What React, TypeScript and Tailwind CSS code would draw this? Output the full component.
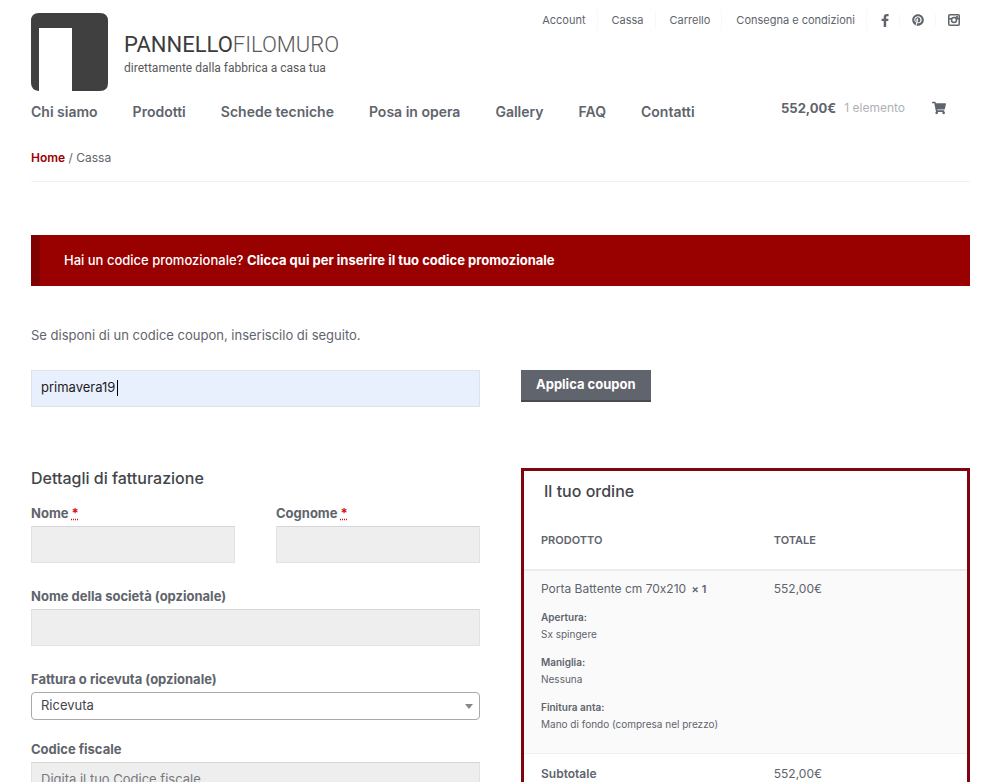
import type { ReactNode } from 'react';
import { FaPinterest, FaShoppingCart } from 'react-icons/fa';

const topLinks = ['Account', 'Cassa', 'Carrello', 'Consegna e condizioni'];

const mainLinks = ['Chi siamo', 'Prodotti', 'Schede tecniche', 'Posa in opera', 'Gallery', 'FAQ', 'Contatti'];

const variations = [
  { name: 'Apertura:', value: 'Sx spingere' },
  { name: 'Maniglia:', value: 'Nessuna' },
  { name: 'Finitura anta:', value: 'Mano di fondo (compresa nel prezzo)' },
];

const inputClass =
  'block w-full h-[37px] px-[9px] pb-1 bg-[#eeeeee] border border-[#e2e2e2] border-t-[#d6d6d6] text-[13px] text-[#43454b] placeholder:text-[#76787d] outline-none';

function FacebookIcon() {
  return (
    <svg viewBox="0 0 8 13" className="w-2 h-[13px]" fill="currentColor">
      <path d="M7.6 0.1V2.2H6.4C5.4 2.2 5.2 2.7 5.2 3.4V4.7H7.5L7.2 7H5.2V13H2.7V7H0.6V4.7H2.7V3C2.7 1 4 0 5.8 0C6.6 0 7.4 0.1 7.6 0.1Z" />
    </svg>
  );
}

function InstagramIcon() {
  return (
    <svg viewBox="0 0 24 24" className="w-3 h-3" fill="none" stroke="currentColor" strokeWidth="3">
      <rect x="1.5" y="1.5" width="21" height="21" rx="2" />
      <path d="M2 9.5h5.5M16.5 9.5H22" />
      <circle cx="12" cy="12" r="5" />
      <rect x="16" y="4.5" width="3.5" height="3" fill="currentColor" strokeWidth="1" />
    </svg>
  );
}

function Logo() {
  return (
    <a href="#home" className="flex mt-[3px]">
      <svg viewBox="0 0 77 78" className="w-[77px] h-[78px]" aria-hidden="true">
        <path
          fill="#404041"
          d="M8 0H69Q77 0 77 8V70Q77 78 69 78H41V15H8V78Q0 77 0 70V8Q0 0 8 0Z"
        />
      </svg>
      <span className="ml-4 pt-4 flex flex-col font-['Roboto',sans-serif] text-[#58595b]">
        <span className="text-[22px] leading-[32px] font-light">
          <span className="font-normal text-[#3c3c3d]">PANNELLO</span>FILOMURO
        </span>
        <span className="text-[12px] leading-[14px]">direttamente dalla fabbrica a casa tua</span>
      </span>
    </a>
  );
}

function Required() {
  return (
    <abbr title="obbligatorio" className="text-[#d5131b] decoration-dotted underline">
      *
    </abbr>
  );
}

function Field({ id, label, children }: { id: string; label: ReactNode; children: ReactNode }) {
  return (
    <div>
      <label htmlFor={id} className="block text-[13px] leading-[26px] font-bold">
        {label}
      </label>
      {children}
    </div>
  );
}

export default function App() {
  return (
    <div className="bg-white px-[31px] pb-10 font-['Inter',sans-serif] text-[13px] text-[#60646c]">
      <header className="pt-2.5">
        <div className="flex justify-between items-start">
          <Logo />
          <nav className="flex items-center pr-2.5 text-[11px] leading-[20px]">
            {topLinks.map((link) => (
              <a key={link} href="#top" className="pr-[11px] mr-3.5 border-r border-[#f8f8f8]">
                {link}
              </a>
            ))}
            <a href="#facebook" aria-label="Facebook" className="pr-2.5 mr-3 border-r border-[#f8f8f8]">
              <FacebookIcon />
            </a>
            <a href="#pinterest" aria-label="Pinterest" className="pr-[11px] mr-3 border-r border-[#f8f8f8]">
              <FaPinterest size={12} />
            </a>
            <a href="#instagram" aria-label="Instagram">
              <InstagramIcon />
            </a>
          </nav>
        </div>

        <div className="flex justify-between items-start">
          <nav className="flex gap-[35px] pt-2 text-[14px] leading-[26px] font-semibold">
            {mainLinks.map((link) => (
              <a key={link} href="#page">
                {link}
              </a>
            ))}
          </nav>
          <a href="#cart" className="flex items-center pt-1 pr-6 leading-[26px]">
            <span className="font-bold">552,00€</span>
            <span className="ml-2 text-[12px] text-[#b0b2b6]">1 elemento</span>
            <FaShoppingCart size={14} className="ml-[27px]" />
          </a>
        </div>
      </header>

      <nav className="mt-[23px] pb-[13px] border-b border-[#f0f0f0] text-[12px] leading-[20px]">
        <a href="#home" className="font-semibold text-[#990000]">
          Home
        </a>{' '}
        / Cassa
      </nav>

      <div className="mt-[53px] h-[51px] flex items-center pl-6 bg-[#990000] border-l-9 border-[#7f0000] text-white">
        <p className="font-medium">
          Hai un codice promozionale?{' '}
          <a href="#coupon" className="font-bold">
            Clicca qui per inserire il tuo codice promozionale
          </a>
        </p>
      </div>

      <form className="mt-[38px]">
        <label htmlFor="coupon" className="block leading-[22px]">
          Se disponi di un codice coupon, inseriscilo di seguito.
        </label>
        <div className="mt-6 grid grid-cols-2 gap-[41px] items-start">
          <div className="relative">
            <input
              id="coupon"
              type="text"
              defaultValue="primavera19"
              className="block w-full h-[37px] px-[9px] pb-1 bg-[#e8f0fe] border border-[#dde3ec] text-[13px] text-[#1f2024] outline-none"
            />
            {/* text cursor */}
            <span className="absolute left-[86px] top-[10px] w-px h-4 bg-black" />
          </div>
          <button
            type="button"
            className="justify-self-start h-8 px-[15px] bg-[#60646c] border-b-2 border-[#484b52] text-white font-bold"
          >
            Applica coupon
          </button>
        </div>
      </form>

      <div className="mt-[61px] grid grid-cols-2 gap-[41px] items-start">
        <form>
          <h3 className="text-[16px] leading-[20px] font-medium text-[#43454b]">Dettagli di fatturazione</h3>
          <div className="mt-3 flex flex-col gap-5">
            <div className="grid grid-cols-2 gap-[41px]">
              <Field id="first-name" label={<>Nome <Required /></>}>
                <input id="first-name" type="text" className={inputClass} />
              </Field>
              <Field id="last-name" label={<>Cognome <Required /></>}>
                <input id="last-name" type="text" className={inputClass} />
              </Field>
            </div>
            <Field id="company" label="Nome della società (opzionale)">
              <input id="company" type="text" className={inputClass} />
            </Field>
            <div className="flex flex-col gap-4">
              <Field id="invoice" label="Fattura o ricevuta (opzionale)">
                <div className="relative">
                  <select
                    id="invoice"
                    defaultValue="Ricevuta"
                    className="block appearance-none w-full h-7 px-[9px] bg-white border border-[#aaaaaa] rounded text-[13px] text-[#43454b]"
                  >
                    <option>Ricevuta</option>
                    <option>Fattura</option>
                  </select>
                  <svg viewBox="0 0 8 5" className="absolute right-[7px] top-3 w-2 h-[5px] pointer-events-none">
                    <path d="M0 0H8L4 5Z" fill="#888888" />
                  </svg>
                </div>
              </Field>
              <Field id="tax-code" label="Codice fiscale">
                <input id="tax-code" type="text" placeholder="Digita il tuo Codice fiscale" className={inputClass} />
              </Field>
            </div>
          </div>
        </form>

        <section className="border-3 border-[#7f0410]">
          <h3 className="pt-[9px] pl-5 text-[16px] leading-[22px] font-medium text-[#43454b]">Il tuo ordine</h3>
          <table className="mt-[10px] w-full table-fixed text-left text-[12px]">
            <thead>
              <tr className="h-[58px] border-b-2 border-[#ececec] text-[11px]">
                <th className="w-[53%] pl-[17px] font-semibold">PRODOTTO</th>
                <th className="pl-[15px] font-semibold">TOTALE</th>
              </tr>
            </thead>
            <tbody>
              <tr className="bg-[#fafafa] border-b border-[#f0f0f0] align-top">
                <td className="pl-[17px] pt-2 pb-5 leading-[20px] [font-feature-settings:'calt'_0]">
                  Porta Battente cm 70x210 <strong className="ml-0.5 text-[11px] font-semibold">× 1</strong>
                  <dl className="mt-[10px] flex flex-col gap-[11px] text-[10px] leading-[17px]">
                    {variations.map((item) => (
                      <div key={item.name}>
                        <dt className="font-semibold">{item.name}</dt>
                        <dd>{item.value}</dd>
                      </div>
                    ))}
                  </dl>
                </td>
                <td className="pl-[15px] pt-2 leading-[20px]">552,00€</td>
              </tr>
              <tr className="h-10">
                <th className="pl-[17px] font-semibold">Subtotale</th>
                <td className="pl-[15px]">552,00€</td>
              </tr>
            </tbody>
          </table>
        </section>
      </div>
    </div>
  );
}
